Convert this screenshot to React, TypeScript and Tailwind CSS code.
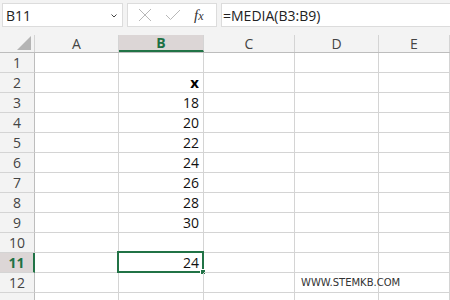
import React from 'react';

const cols = ['A', 'B', 'C', 'D', 'E'];
const colW = ['w-[84px]', 'w-[85px]', 'w-[91px]', 'w-[84px]', 'flex-1'];

const values: Record<number, string> = {
  2: 'x',
  3: '18',
  4: '20',
  5: '22',
  6: '24',
  7: '26',
  8: '28',
  9: '30',
  11: '24',
};

const App: React.FC = () => {
  const rows = Array.from({ length: 13 }, (_, i) => i + 1);

  return (
    <div className="w-[450px] h-[300px] overflow-hidden bg-white font-['Open_Sans','Liberation_Sans',sans-serif] text-[#222]">
      {/* Formula bar */}
      <div className="h-[35px] bg-[#f3f3f3] flex items-start pt-[3px] pl-[2px] gap-[4px]">
        <div className="w-[121px] h-[24px] bg-white border border-[#dcdcdc] flex items-center justify-between pl-[3px] pr-[4px]">
          <span className="text-[14px] text-[#222]">B11</span>
          <svg width="8" height="6" viewBox="0 0 8 6" className="mt-[1px]">
            <path d="M1.5 1.5 L4 4 L6.5 1.5" fill="none" stroke="#444" strokeWidth="1" />
          </svg>
        </div>
        <div className="w-[90px] h-[24px] bg-white border border-[#dcdcdc] flex items-center pl-[10px] gap-[13px]">
          <svg width="14" height="14" viewBox="0 0 14 14">
            <path d="M1 1 L13 13 M13 1 L1 13" stroke="#b8b8b8" strokeWidth="1" fill="none" />
          </svg>
          <svg width="16" height="12" viewBox="0 0 16 12">
            <path d="M1 6 L5.5 10.5 L15 1" stroke="#b8b8b8" strokeWidth="1" fill="none" />
          </svg>
          <span className="text-[15px] italic font-['Liberation_Serif',serif] text-[#333] leading-none">
            f<span className="text-[12px]">x</span>
          </span>
        </div>
        <div className="flex-1 h-[24px] bg-white border-y border-l border-[#dcdcdc] flex items-center pl-[1px]">
          <span className="text-[14px] text-[#222]">=MEDIA(B3:B9)</span>
        </div>
      </div>

      {/* Column headers */}
      <div className="flex h-[18px] bg-[#f3f3f3] border-b border-[#bdbdbd]">
        <div className="w-[35px] border-r border-[#d4d4d4] relative">
          <svg width="16" height="16" viewBox="0 0 16 16" className="absolute right-[2px] bottom-[1px]">
            <path d="M15 1 L15 15 L1 15 Z" fill="#b4b4b4" />
          </svg>
        </div>
        {cols.map((c, i) => (
          <div
            key={c}
            className={`${colW[i]} flex items-center justify-center text-[14px] ${
              c === 'B'
                ? 'bg-[#dcd6d6] text-[#1e7145] font-bold border-b-2 border-[#217346] border-r border-r-[#d4d4d4]'
                : 'text-[#444] border-r border-[#d4d4d4]'
            }`}
          >
            {c}
          </div>
        ))}
      </div>

      {/* Grid */}
      {rows.map((r) => (
        <div key={r} className="flex h-[20px]">
          <div
            className={`w-[35px] flex items-center justify-center text-[14px] border-b border-[#d4d4d4] ${
              r === 11
                ? 'bg-[#dcd6d6] text-[#1e7145] font-bold border-r-2 border-r-[#217346]'
                : 'bg-[#f3f3f3] text-[#444] border-r border-r-[#bdbdbd]'
            }`}
          >
            {r < 13 ? r : ''}
          </div>
          {cols.map((c, i) => {
            const isSel = c === 'B' && r === 11;
            const val = c === 'B' ? values[r] : undefined;
            return (
              <div
                key={c}
                className={`${colW[i]} relative border-r border-b border-[#d4d4d4] flex items-center ${
                  c === 'B' ? 'justify-end pr-[4px]' : 'justify-start pl-[6px]'
                } text-[14px]`}
              >
                {val && (
                  <span className={r === 2 ? 'font-bold text-black text-[15px]' : 'text-[#111]'}>{val}</span>
                )}
                {c === 'D' && r === 12 && (
                  <span className="font-['DejaVu_Sans',sans-serif] text-[10px] text-[#333] whitespace-nowrap">
                    WWW.STEMKB.COM
                  </span>
                )}
                {isSel && (
                  <>
                    <div className="absolute -left-[2px] -top-[2px] -right-[1px] -bottom-[1px] border-2 border-[#217346] pointer-events-none" />
                    <div className="absolute -right-[3px] -bottom-[3px] w-[6px] h-[6px] bg-[#217346] border border-white" />
                  </>
                )}
              </div>
            );
          })}
        </div>
      ))}
    </div>
  );
};

export default App;
